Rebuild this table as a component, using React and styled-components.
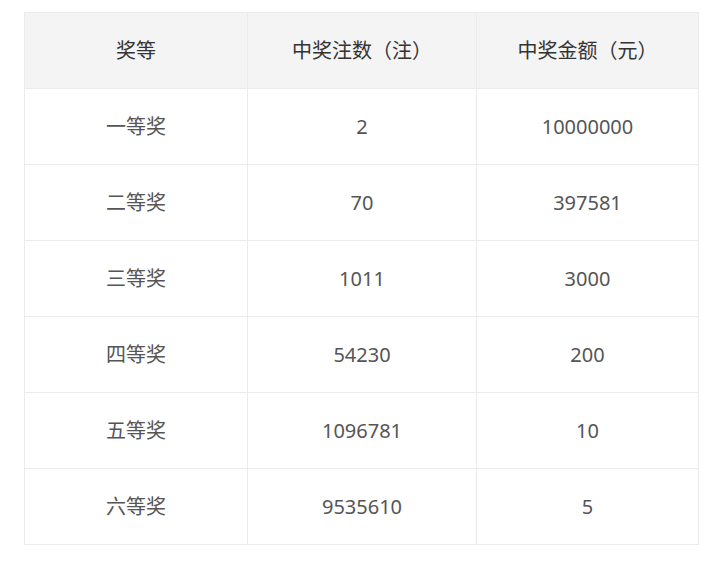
import React from "react";
import styled, { createGlobalStyle } from "styled-components";

const GlobalStyle = createGlobalStyle`
  html, body {
    margin: 0;
    padding: 0;
    background: #ffffff;
  }
  body {
    font-family: "Noto Sans", "Noto Sans CJK SC", sans-serif;
  }
`;

const Page = styled.div`
  padding: 12px 27px 16px 24px;
`;

const Table = styled.table`
  width: 674px;
  border-collapse: collapse;
  table-layout: fixed;
  font-size: 20px;
  line-height: 24px;
`;

const HeadCell = styled.th`
  height: 75px;
  padding: 0;
  background: #f4f4f4;
  border: 1px solid #ebebeb;
  color: #333333;
  font-weight: normal;
  text-align: center;
  vertical-align: middle;
`;

const Cell = styled.td`
  height: 75px;
  padding: 0;
  border: 1px solid #ebebeb;
  color: #555555;
  text-align: center;
  vertical-align: middle;
`;

const rows = [
  ["一等奖", "2", "10000000"],
  ["二等奖", "70", "397581"],
  ["三等奖", "1011", "3000"],
  ["四等奖", "54230", "200"],
  ["五等奖", "1096781", "10"],
  ["六等奖", "9535610", "5"],
];

const App = () => {
  return (
    <Page>
      <GlobalStyle />
      <Table>
        <colgroup>
          <col style={{ width: "223px" }} />
          <col style={{ width: "229px" }} />
          <col style={{ width: "222px" }} />
        </colgroup>
        <thead>
          <tr>
            <HeadCell>奖等</HeadCell>
            <HeadCell>中奖注数（注）</HeadCell>
            <HeadCell>中奖金额（元）</HeadCell>
          </tr>
        </thead>
        <tbody>
          {rows.map((row) => (
            <tr key={row[0]}>
              {row.map((value, i) => (
                <Cell key={i}>{value}</Cell>
              ))}
            </tr>
          ))}
        </tbody>
      </Table>
    </Page>
  );
};

export default App;
